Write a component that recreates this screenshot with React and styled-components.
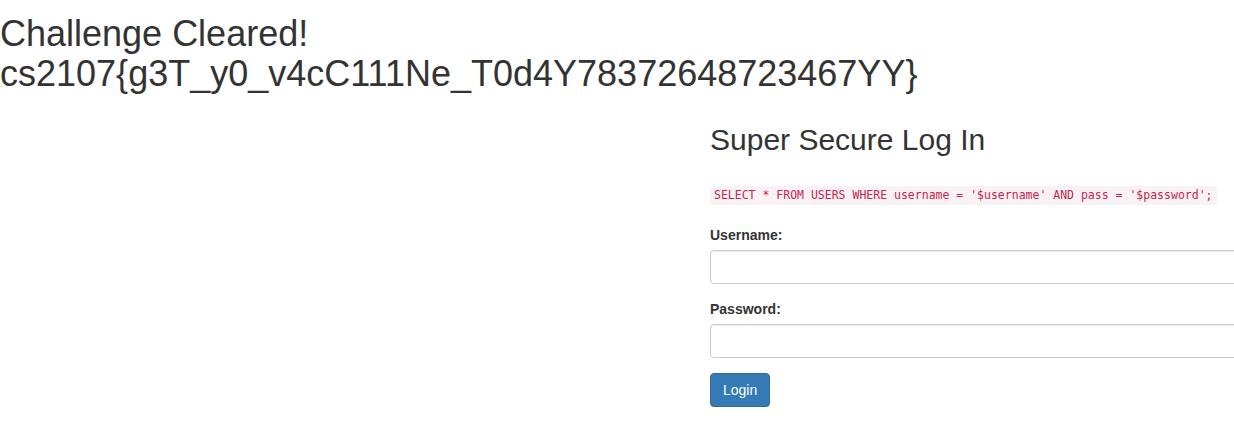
import React from "react";
import styled, { createGlobalStyle } from "styled-components";

const GlobalStyle = createGlobalStyle`
  html, body {
    margin: 0;
    padding: 0;
    background: #fff;
    overflow-x: hidden;
  }
  body {
    font-family: "Liberation Sans", Arial, Helvetica, sans-serif;
    font-size: 14px;
    line-height: 1.42857143;
    color: #333;
  }
  * { box-sizing: border-box; }
`;

const Page = styled.div`
  display: flex;
  flex-direction: column;
  width: 1400px;
`;

const Banner = styled.h1`
  margin: 14px 0 10px;
  font-size: 36px;
  font-weight: 500;
  line-height: 1.1;
  color: #333;
`;

const FormColumn = styled.div`
  margin-left: 710px;
  width: 600px;
  display: flex;
  flex-direction: column;
`;

const Title = styled.h2`
  margin: 20px 0 10px;
  font-size: 30px;
  font-weight: 500;
  line-height: 1.1;
  color: #333;
`;

const QueryLine = styled.div`
  display: flex;
  margin: 20px 0 20px;
`;

const Code = styled.code`
  display: inline-block;
  padding: 2px 4px;
  font-family: "DejaVu Sans Mono", "Liberation Mono", monospace;
  font-size: 11.5px;
  line-height: 15px;
  color: #c7254e;
  background-color: #f9f2f4;
  border-radius: 4px;
  white-space: pre;
`;

const FormGroup = styled.div`
  display: flex;
  flex-direction: column;
  margin-bottom: 15px;
`;

const Label = styled.label`
  display: block;
  margin-bottom: 5px;
  font-weight: 700;
  font-size: 14px;
  line-height: 20px;
`;

const Input = styled.input`
  display: block;
  width: 100%;
  height: 34px;
  padding: 6px 12px;
  font-family: inherit;
  font-size: 14px;
  line-height: 20px;
  color: #555;
  background: #fff;
  border: 1px solid #ccc;
  border-radius: 4px;
  box-shadow: inset 0 1px 1px rgba(0, 0, 0, 0.075);
  outline: none;
`;

const Button = styled.button`
  align-self: flex-start;
  height: 34px;
  padding: 6px 12px;
  font-family: inherit;
  font-size: 14px;
  line-height: 20px;
  color: #fff;
  background-color: #337ab7;
  border: 1px solid #2e6da4;
  border-radius: 4px;
  cursor: pointer;
`;

export default function App() {
  return (
    <>
      <GlobalStyle />
      <Page>
        <Banner>
          Challenge Cleared!
          <br />
          cs2107{"{"}g3T_y0_v4cC111Ne_T0d4Y78372648723467YY{"}"}
        </Banner>
        <FormColumn>
          <Title>Super Secure Log In</Title>
          <QueryLine>
            <Code>
              SELECT * FROM USERS WHERE username = '$username' AND pass = '$password';
            </Code>
          </QueryLine>
          <FormGroup>
            <Label htmlFor="username">Username:</Label>
            <Input id="username" type="text" />
          </FormGroup>
          <FormGroup>
            <Label htmlFor="password">Password:</Label>
            <Input id="password" type="password" />
          </FormGroup>
          <Button type="button">Login</Button>
        </FormColumn>
      </Page>
    </>
  );
}
